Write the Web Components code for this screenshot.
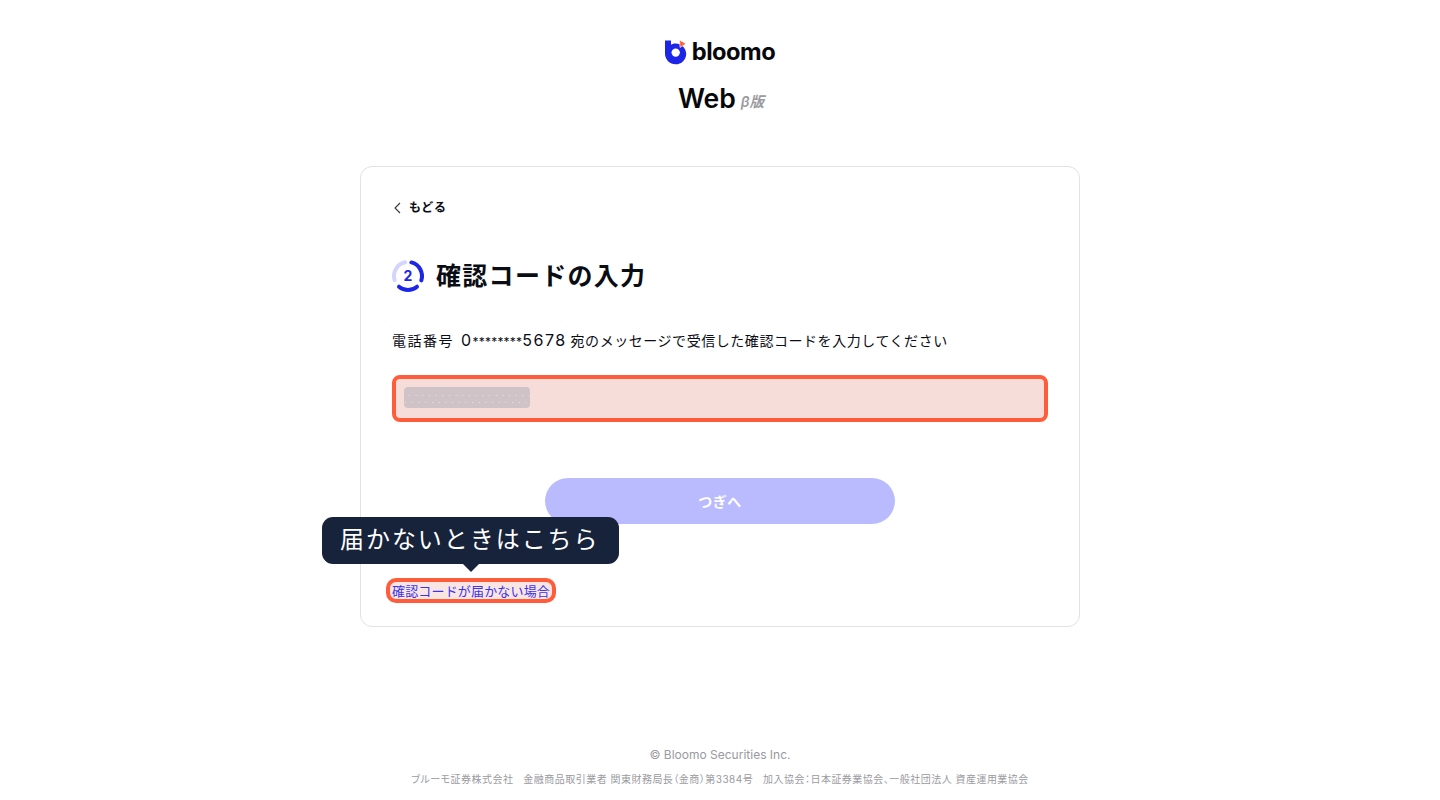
<!DOCTYPE html>
<html lang="ja">
<head>
<meta charset="utf-8">
<title>bloomo</title>
<style>
  html, body { margin: 0; height: 100%; background: #fff; }
  body { font-family: Inter, "Noto Sans CJK JP", sans-serif; color: #0b0d14; }
  .lead { margin: 37px 0 0; height: 20px; font-size: 14px; line-height: 20px; white-space: nowrap; }
  .lead .label { letter-spacing: 1.500px; margin-right: 3px; }
  .lead .num { font-size: 16px; letter-spacing: 1.500px; }
  .lead .num small { font-size: 12px; letter-spacing: .2px; }
  .lead .rest { letter-spacing: .55px; }
</style>
</head>
<body>
<bl-page>
  <bl-brand slot="brand"></bl-brand>
  <bl-card>
    <bl-back>もどる</bl-back>
    <bl-step step="2">確認コードの入力</bl-step>
    <p class="lead"><span class="label">電話番号</span> <span class="num">0<small>********</small>5678</span> <span class="rest">宛のメッセージで受信した確認コードを入力してください</span></p>
    <bl-code-input></bl-code-input>
    <bl-button>つぎへ</bl-button>
    <bl-tip-link tip="届かないときはこちら">確認コードが届かない場合</bl-tip-link>
  </bl-card>
  <bl-footer slot="footer"></bl-footer>
</bl-page>
<script>
class BlPage extends HTMLElement {
  constructor() {
    super();
    this.attachShadow({ mode: 'open' });
    this.shadowRoot.innerHTML = `
      <style>
        :host { display: flex; flex-direction: column; align-items: center; height: 800px; overflow: hidden; }
        .main { margin-top: 52px; }
        .foot { margin-top: auto; }
      </style>
      <slot name="brand"></slot>
      <div class="main"><slot></slot></div>
      <div class="foot"><slot name="footer"></slot></div>
    `;
  }
}
class BlBrand extends HTMLElement {
  constructor() {
    super();
    this.attachShadow({ mode: 'open' });
    this.shadowRoot.innerHTML = `
      <style>
        :host { display: flex; flex-direction: column; align-items: center; padding-top: 39px; }
        .logo { display: flex; align-items: center; gap: 5px; height: 26px; }
        .logo svg { display: block; }
        .name { font: 700 23.700px/26px Inter, sans-serif; letter-spacing: -.5px; color: #07080c; }
        .web { display: flex; align-items: baseline; gap: 5px; margin-top: 17px; height: 32px; line-height: 32px; margin-left: 2px; }
        .web b { font: 600 26.500px/32px Inter, sans-serif; color: #07080c; }
        .web i { font: italic 600 14.500px/32px Inter, "Noto Sans CJK JP", sans-serif; color: #9b9ba1; position: relative; top: -1.500px; }
      </style>
      <div class="logo">
        <svg width="22" height="26" viewBox="0 0 22 26">
          <path fill="#1d26e6" d="M0 1.500h6v4.300c1.400-1 2.900-1.400 4.600-1.400 5.900 0 10.600 4.700 10.600 10.500s-4.700 10.400-10.600 10.400C4.700 25.300 0 20.600 0 14.800z"/>
          <circle cx="10.700" cy="13.600" r="4.200" fill="#fff"/>
          <path fill="#ff5c3c" stroke="#fff" stroke-width=".6" d="M14.500 1 21 4.800 15 8.500z"/>
        </svg>
        <span class="name">bloomo</span>
      </div>
      <div class="web"><b>Web</b><i>β版</i></div>
    `;
  }
}
class BlCard extends HTMLElement {
  constructor() {
    super();
    this.attachShadow({ mode: 'open' });
    this.shadowRoot.innerHTML = `
      <style>
        :host { display: block; box-sizing: border-box; width: 720px; height: 461px; padding: 33px 31px; background: #fff; border: 1px solid #e2e2e4; border-radius: 12px; position: relative; }
      </style>
      <slot></slot>
    `;
  }
}
class BlBack extends HTMLElement {
  constructor() {
    super();
    this.attachShadow({ mode: 'open' });
    this.shadowRoot.innerHTML = `
      <style>
        :host { display: flex; align-items: center; gap: 8px; height: 16px; font-size: 12px; font-weight: 700; line-height: 16px; letter-spacing: .6px; color: #0b0d14; }
        svg { display: block; margin-left: 2px; }
      </style>
      <svg width="7" height="12" viewBox="0 0 7 12" fill="none" stroke="#33343a" stroke-width="1.100"><path d="M6 1 1 6l5 5"/></svg>
      <slot></slot>
    `;
  }
}
class BlStep extends HTMLElement {
  constructor() {
    super();
    this.attachShadow({ mode: 'open' });
    const step = this.getAttribute('step');
    this.shadowRoot.innerHTML = `
      <style>
        :host { display: flex; align-items: center; gap: 12px; margin-top: 43px; height: 34px; }
        svg { display: block; flex: none; }
        .t { font-size: 25px; font-weight: 700; line-height: 34px; letter-spacing: 1.300px; color: #0b0d14; white-space: nowrap; }
      </style>
      <svg width="32" height="32" viewBox="0 0 32 32" fill="none" stroke-width="4" stroke-linecap="round">
        <path stroke="#d3d5ff" d="M2.610 20.090A14 14 0 0 1 13.090 2.310"/>
        <path stroke="#1d26e6" d="M19.390 2.420A14 14 0 0 1 29.310 20.330"/>
        <path stroke="#1d26e6" d="M25 26.720A14 14 0 0 1 7 26.720"/>
        <text x="16" y="21" text-anchor="middle" font-family="Inter, sans-serif" font-size="14" font-weight="700" fill="#1d26e6" stroke="none">${step}</text>
      </svg>
      <span class="t"><slot></slot></span>
    `;
  }
}
class BlCodeInput extends HTMLElement {
  constructor() {
    super();
    this.attachShadow({ mode: 'open' });
    this.shadowRoot.innerHTML = `
      <style>
        :host { display: flex; align-items: flex-start; box-sizing: border-box; height: 47px; margin-top: 25px; padding: 8px 8px 0; background: #f6ddd9; border: 4px solid #ff5c3c; border-radius: 8px; }
        .mask { width: 126px; height: 21px; border-radius: 4px; background-color: #d0c3c7;
          background-image: radial-gradient(circle, #ece3e4 .5px, transparent .8px), radial-gradient(circle, #ece3e4 .5px, transparent .8px);
          background-size: 6.700px 7px, 6.700px 7px; background-position: 2px 5px, 5px 12px; background-repeat: repeat-x; }
      </style>
      <div class="mask"></div>
    `;
  }
}
class BlButton extends HTMLElement {
  constructor() {
    super();
    this.attachShadow({ mode: 'open' });
    this.shadowRoot.innerHTML = `
      <style>
        :host { display: flex; align-items: center; justify-content: center; width: 350px; height: 46px; margin: 56px auto 0; border-radius: 23px; background: #babbff; color: #fff; font-size: 14px; font-weight: 700; letter-spacing: .5px; }
      </style>
      <slot></slot>
    `;
  }
}
class BlTipLink extends HTMLElement {
  constructor() {
    super();
    this.attachShadow({ mode: 'open' });
    const tip = this.getAttribute('tip');
    this.shadowRoot.innerHTML = `
      <style>
        :host { display: block; position: relative; width: max-content; margin: 54px 0 0 -6px; }
        .link { display: block; box-sizing: border-box; height: 25px; padding: 0 2px; border: 4px solid #ff5c3c; border-radius: 10px; background: #f9e6e3; color: #3a34f0; font-size: 13px; line-height: 19px; letter-spacing: .17px; white-space: nowrap; }
        .tip { position: absolute; left: -64px; bottom: 39px; box-sizing: border-box; width: 297px; height: 47px; padding: 0 18px; border-radius: 11px; background: #17223b; color: #fff; font-size: 24px; line-height: 46px; letter-spacing: 1.950px; white-space: nowrap; }
        .tip::after { content: ""; position: absolute; left: 141px; bottom: -8px; border: 8px solid transparent; border-bottom: 0; border-top-color: #17223b; }
      </style>
      <div class="tip">${tip}</div>
      <span class="link"><slot></slot></span>
    `;
  }
}
class BlFooter extends HTMLElement {
  constructor() {
    super();
    this.attachShadow({ mode: 'open' });
    this.shadowRoot.innerHTML = `
      <style>
        :host { display: block; text-align: center; color: #9a9aa0; padding-bottom: 13px; }
        .c { font-size: 12px; line-height: 16px; }
        .l { margin-top: 8px; font-size: 10px; line-height: 16px; letter-spacing: .48px; white-space: pre; font-feature-settings: "palt"; }
      </style>
      <div class="c">© Bloomo Securities Inc.</div>
      <div class="l">ブルーモ証券株式会社   金融商品取引業者 関東財務局長（金商）第3384号   加入協会：日本証券業協会、一般社団法人 資産運用業協会</div>
    `;
  }
}
customElements.define('bl-page', BlPage);
customElements.define('bl-brand', BlBrand);
customElements.define('bl-card', BlCard);
customElements.define('bl-back', BlBack);
customElements.define('bl-step', BlStep);
customElements.define('bl-code-input', BlCodeInput);
customElements.define('bl-button', BlButton);
customElements.define('bl-tip-link', BlTipLink);
customElements.define('bl-footer', BlFooter);
</script>
</body>
</html>
